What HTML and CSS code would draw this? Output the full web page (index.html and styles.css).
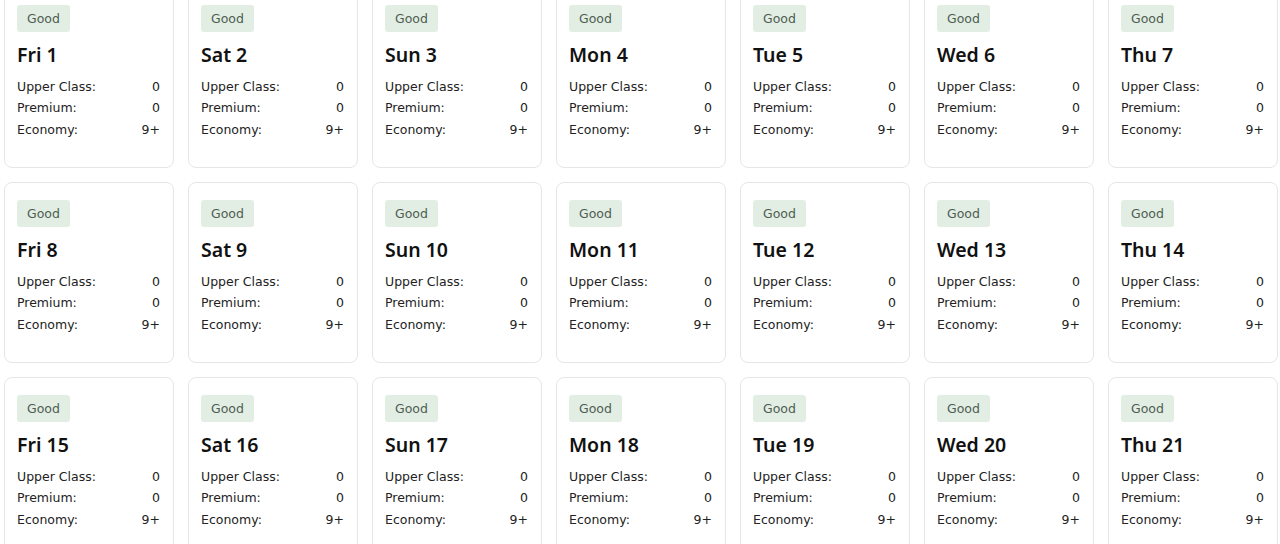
FILE: index.html
```html
<!DOCTYPE html>
<html lang="en">
<head>
<meta charset="utf-8">
<title>Availability</title>
<link rel="stylesheet" href="styles.css">
</head>
<body>
<div class="grid" id="grid"></div>
<script src="app.js"></script>
</body>
</html>
```
FILE: styles.css
```css
html, body {
  margin: 0;
  padding: 0;
  background: #ffffff;
}
body {
  font-family: "DejaVu Sans", "Noto Sans", sans-serif;
  color: #1a1a1a;
  overflow: hidden;
}
.grid {
  display: grid;
  grid-template-columns: repeat(7, 170px);
  column-gap: 14px;
  row-gap: 14px;
  padding-left: 4px;
  margin-top: -13px;
}
.card {
  box-sizing: border-box;
  height: 181px;
  border: 1px solid #e6e6e6;
  border-radius: 8px;
  padding: 17px 13px 0 12px;
  background: #fff;
}
.badge {
  display: inline-block;
  height: 27px;
  line-height: 27px;
  padding: 0 10px;
  border-radius: 3px;
  background: #e2ede4;
  color: #4d5e51;
  font-size: 12.5px;
}
.title {
  margin: 11px 0 0;
  font-family: "Noto Sans", sans-serif;
  font-size: 19.5px;
  line-height: 24px;
  font-weight: 600;
  color: #111;
}
.rows {
  margin-top: 9px;
}
.row {
  display: flex;
  justify-content: space-between;
  font-size: 12.5px;
  line-height: 21.3px;
  color: #222;
}
```
FILE: app.js
```js
const days = ["Fri","Sat","Sun","Mon","Tue","Wed","Thu"];
const grid = document.getElementById("grid");
for (let d = 1; d <= 21; d++) {
  const card = document.createElement("div");
  card.className = "card";
  card.innerHTML =
    '<span class="badge">Good</span>' +
    '<div class="title">' + days[(d - 1) % 7] + ' ' + d + '</div>' +
    '<div class="rows">' +
    '<div class="row"><span>Upper Class:</span><span>0</span></div>' +
    '<div class="row"><span>Premium:</span><span>0</span></div>' +
    '<div class="row"><span>Economy:</span><span>9+</span></div>' +
    '</div>';
  grid.appendChild(card);
}
```
